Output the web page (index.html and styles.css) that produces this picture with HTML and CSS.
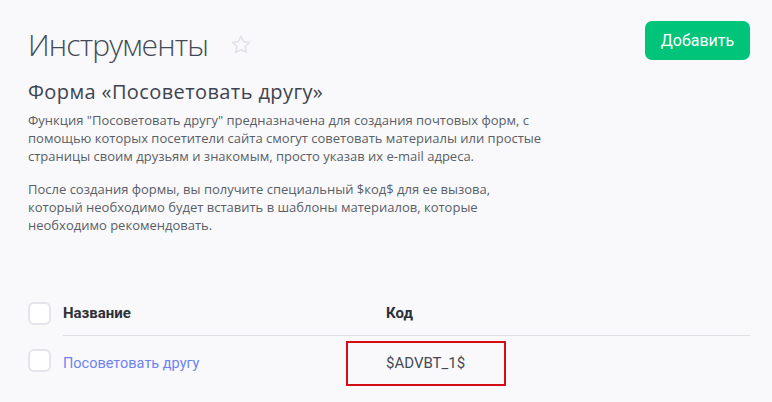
FILE: index.html
```html
<!DOCTYPE html>
<html lang="ru">
<head>
<meta charset="utf-8">
<title>Инструменты</title>
<link rel="stylesheet" href="styles.css">
</head>
<body>
<div class="page">
  <header class="head">
    <div class="title-wrap">
      <h1 class="title">Инструменты</h1>
      <svg class="star" width="20" height="19" viewBox="0 0 24 23"><path d="M12 1.5l3.1 6.6 7.2.9-5.3 5 1.4 7.1L12 17.6l-6.4 3.5L7 14l-5.3-5 7.2-.9z" fill="none" stroke="#dfe1e8" stroke-width="1.8" stroke-linejoin="round"/></svg>
    </div>
    <button class="btn-add">Добавить</button>
  </header>
  <h2 class="subtitle">Форма «Посоветовать другу»</h2>
  <p class="desc">Функция "Посоветовать другу" предназначена для создания почтовых форм, с помощью которых посетители сайта смогут советовать материалы или простые страницы своим друзьям и знакомым, просто указав их e-mail адреса.</p>
  <p class="desc">После создания формы, вы получите специальный $код$ для ее вызова, который необходимо будет вставить в шаблоны материалов, которые необходимо рекомендовать.</p>
  <div class="table">
    <div class="row row-head">
      <span class="check"></span>
      <div class="cells">
        <span class="col-name">Название</span>
        <span class="col-code">Код</span>
      </div>
    </div>
    <div class="row row-body">
      <span class="check"></span>
      <div class="cells">
        <a class="col-name link" href="#">Посоветовать другу</a>
        <span class="col-code"><span class="code-box">$ADVBT_1$</span></span>
      </div>
    </div>
  </div>
</div>
</body>
</html>
```
FILE: styles.css
```css
html, body {
  margin: 0;
  padding: 0;
  background: #f9f9fb;
}
.page {
  padding: 20px 22px 0 28px;
  font-family: "Open Sans", "Noto Sans", sans-serif;
  color: #333;
}
.head {
  display: flex;
  justify-content: space-between;
  align-items: flex-start;
}
.title-wrap {
  display: flex;
  align-items: center;
  gap: 23px;
  padding-top: 5px;
}
.title {
  margin: 0;
  font-size: 30px;
  font-weight: 300;
  letter-spacing: -0.85px;
  line-height: 40px;
  color: #444a55;
}
.star {
  display: block;
  margin-top: -2px;
}
.btn-add {
  width: 105px;
  height: 39px;
  padding: 0;
  margin-top: 1px;
  border: 0;
  border-radius: 7px;
  background: #00c47a;
  color: #fff;
  font-family: "Roboto", "Noto Sans", sans-serif;
  font-size: 16px;
}
.subtitle {
  margin: 14px 0 0;
  font-size: 20px;
  font-weight: 400;
  letter-spacing: 0.4px;
  line-height: 26px;
  color: #3d4350;
}
.desc {
  margin: 6px 0 0;
  font-size: 13px;
  line-height: 18px;
  color: #5a5e66;
  max-width: 520px;
}
.desc + .desc {
  margin-top: 15px;
}
.table {
  margin-top: 60px;
}
.row {
  display: flex;
  align-items: flex-start;
}
.check {
  flex: none;
  box-sizing: border-box;
  width: 23px;
  height: 23px;
  border: 2px solid #e4e5ea;
  border-radius: 6px;
  background: #fff;
  margin-right: 12px;
}
.cells {
  flex: 1;
  display: flex;
  align-items: center;
}
.row-head {
  align-items: center;
}
.row-head .cells {
  height: 37px;
  padding-bottom: 4px;
  border-bottom: 1px solid #dfe0e4;
}
.row-head .check {
  margin-top: -4px;
}
.row-body {
  padding-top: 5px;
}
.row-body .check {
  margin-top: 8px;
}
.row-body .cells {
  height: 45px;
}
.col-name {
  width: 323px;
  flex: none;
  font-family: "Roboto", "Noto Sans", sans-serif;
  font-size: 15px;
}
.row-head span {
  font-weight: 700;
  color: #2c3038;
}
.link {
  font-size: 14.5px;
  letter-spacing: 0;
  color: #6e82f2;
  text-decoration: none;
}
.col-code {
  font-family: "Roboto", "Noto Sans", sans-serif;
  font-size: 15px;
  color: #444a55;
}
.row-body .col-code {
  margin-left: -40px;
}
.code-box {
  display: block;
  box-sizing: border-box;
  width: 160px;
  height: 45px;
  line-height: 41px;
  padding-left: 38px;
  border: 2px solid #d40e14;
}
```
